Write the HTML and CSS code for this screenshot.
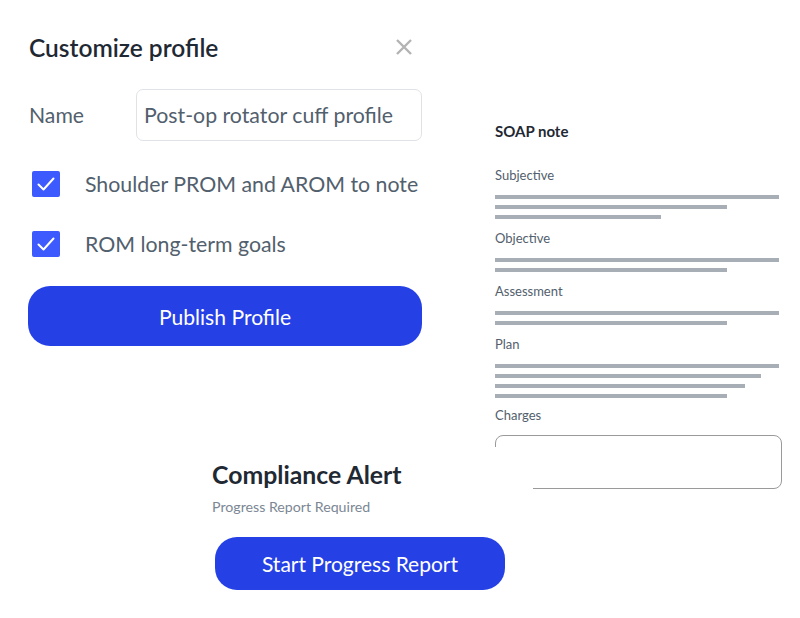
FILE: index.html
```html
<!DOCTYPE html>
<html lang="en">
<head>
<meta charset="utf-8">
<title>Customize profile</title>
<link rel="stylesheet" href="styles.css">
</head>
<body>
<div class="page">
  <section class="modal">
    <header class="modal-head">
      <h1 class="modal-title">Customize profile</h1>
      <button class="close" aria-label="Close">
        <svg width="16" height="16" viewBox="0 0 16 16"><path d="M1 1L15 15M15 1L1 15" stroke="#b3b3b3" stroke-width="2.4" fill="none"/></svg>
      </button>
    </header>
    <div class="field">
      <label class="field-label">Name</label>
      <div class="input">Post-op rotator cuff profile</div>
    </div>
    <div class="check-row">
      <span class="checkbox"><svg width="20" height="16" viewBox="0 0 20 16"><path d="M2.5 8.5L7.5 13.5L17.5 2.5" stroke="#fff" stroke-width="2" fill="none" stroke-linecap="round" stroke-linejoin="round"/></svg></span>
      <span class="check-label">Shoulder PROM and AROM to note</span>
    </div>
    <div class="check-row">
      <span class="checkbox"><svg width="20" height="16" viewBox="0 0 20 16"><path d="M2.5 8.5L7.5 13.5L17.5 2.5" stroke="#fff" stroke-width="2" fill="none" stroke-linecap="round" stroke-linejoin="round"/></svg></span>
      <span class="check-label">ROM long-term goals</span>
    </div>
    <button class="btn btn-publish">Publish Profile</button>
  </section>

  <section class="soap">
    <h2 class="soap-title">SOAP note</h2>
    <div class="soap-label">Subjective</div>
    <div class="lines">
      <div class="line" style="width:284px"></div>
      <div class="line" style="width:232px"></div>
      <div class="line" style="width:166px"></div>
    </div>
    <div class="soap-label">Objective</div>
    <div class="lines">
      <div class="line" style="width:284px"></div>
      <div class="line" style="width:232px"></div>
    </div>
    <div class="soap-label">Assessment</div>
    <div class="lines">
      <div class="line" style="width:284px"></div>
      <div class="line" style="width:232px"></div>
    </div>
    <div class="soap-label">Plan</div>
    <div class="lines">
      <div class="line" style="width:284px"></div>
      <div class="line" style="width:266px"></div>
      <div class="line" style="width:250px"></div>
      <div class="line" style="width:232px"></div>
    </div>
    <div class="soap-label charges-label">Charges</div>
    <div class="charges-box"></div>
  </section>

  <section class="alert">
    <h2 class="alert-title">Compliance Alert</h2>
    <p class="alert-sub">Progress Report Required</p>
    <button class="btn btn-start">Start Progress Report</button>
  </section>
</div>
</body>
</html>
```

FILE: styles.css
```css
* { box-sizing: border-box; }
html, body { margin: 0; padding: 0; background: #fff; }
body {
  font-family: Lato, "Open Sans", "Liberation Sans", sans-serif;
  width: 800px;
  height: 618px;
  overflow: hidden;
}
.page {
  position: relative;
  width: 800px;
  height: 618px;
  display: flex;
}
.modal {
  width: 480px;
  padding: 28px 0 0 28px;
  display: flex;
  flex-direction: column;
}
.modal-head {
  width: 394px;
  display: flex;
  justify-content: space-between;
  align-items: center;
  height: 38px;
}
.modal-title {
  margin: 0 0 0 1px;
  font-size: 24.5px;
  font-weight: 600;
  color: #1f2933;
}
.close {
  border: 0;
  background: none;
  padding: 0;
  margin-right: 10px;
  width: 16px;
  height: 16px;
  display: flex;
}
.field {
  margin-top: 23px;
  display: flex;
  align-items: center;
  width: 394px;
}
.field-label {
  width: 108px;
  padding-left: 1px;
  font-size: 21.2px;
  color: #52606d;
}
.input {
  width: 286px;
  height: 52px;
  border: 1.5px solid #dfe3e8;
  border-radius: 7px;
  padding-left: 7px;
  display: flex;
  align-items: center;
  font-size: 21.3px;
  color: #52606d;
}
.check-row {
  display: flex;
  align-items: center;
  height: 26px;
  margin-top: 30px;
}
.check-row + .check-row { margin-top: 34px; }
.checkbox {
  width: 28px;
  height: 26px;
  margin-left: 4px;
  border-radius: 2px;
  background: #3d5afe;
  display: flex;
  align-items: center;
  justify-content: center;
}
.check-label {
  margin-left: 25px;
  font-size: 21.3px;
  color: #52606d;
}
.btn {
  border: 0;
  font-family: inherit;
  color: #fff;
  background: #2541e6;
  cursor: pointer;
}
.btn-publish {
  margin-top: 29px;
  width: 394px;
  height: 60px;
  border-radius: 22px;
  font-size: 21.1px;
}
.soap {
  width: 320px;
  padding: 122px 0 0 15px;
  display: flex;
  flex-direction: column;
}
.soap-title {
  margin: 0;
  font-size: 15px;
  font-weight: 700;
  color: #1f2933;
  line-height: 18px;
}
.soap-label {
  font-size: 13px;
  color: #52606d;
  line-height: 18px;
}
.soap-title + .soap-label { margin-top: 26px; }
.lines {
  display: flex;
  flex-direction: column;
  gap: 6px;
  margin: 11px 0 10px;
}
.line {
  height: 4px;
  background: #a7aeb5;
}
.charges-label { margin-top: -2px; }
.charges-box {
  margin-top: 11px;
  width: 287px;
  height: 54px;
  border: 1.5px solid #9a9a9a;
  border-radius: 8px;
}
.alert {
  position: absolute;
  left: 190px;
  top: 447px;
  width: 343px;
  height: 171px;
  background: #fff;
  padding: 13px 0 0 22px;
}
.alert-title {
  margin: 0;
  font-size: 24.8px;
  font-weight: 700;
  color: #1f2933;
  line-height: 30px;
}
.alert-sub {
  margin: 8px 0 0;
  font-size: 14.2px;
  color: #7b8794;
  line-height: 18px;
}
.btn-start {
  margin: 21px 0 0 3px;
  width: 290px;
  height: 53px;
  border-radius: 22px;
  font-size: 21px;
}
```
